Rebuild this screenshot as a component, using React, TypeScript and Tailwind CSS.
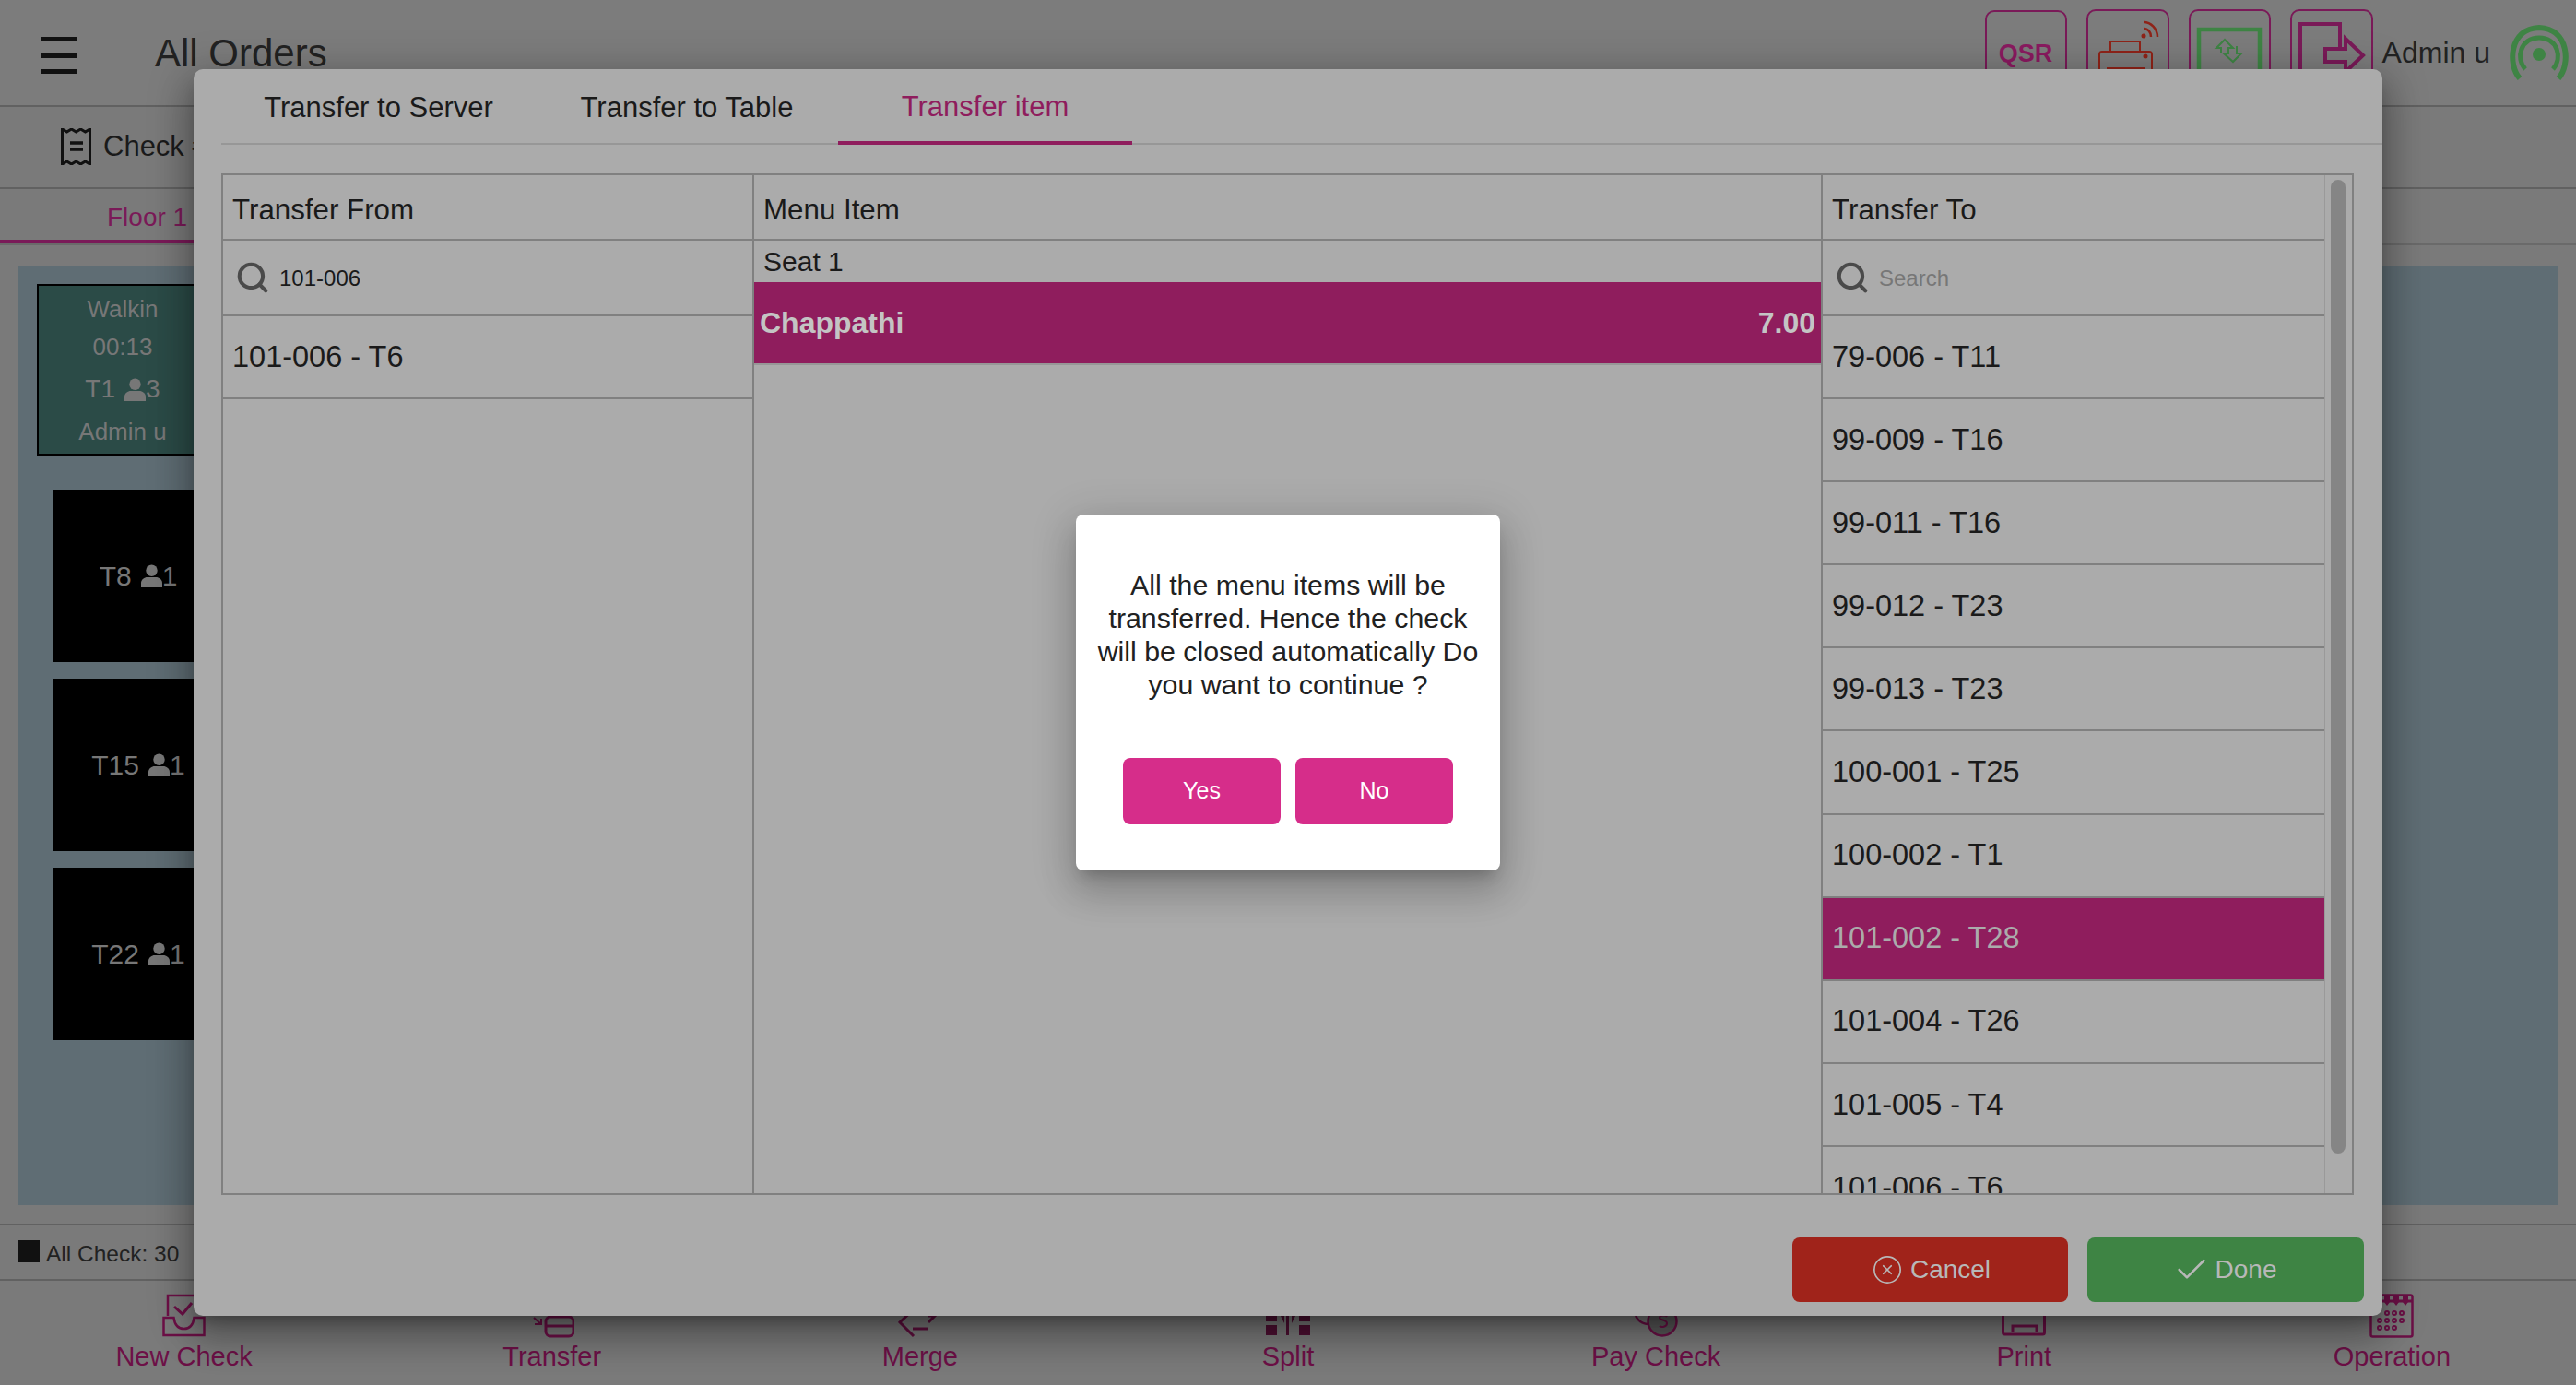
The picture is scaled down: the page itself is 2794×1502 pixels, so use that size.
import { Check, CircleX, Search } from 'lucide-react';

const FROM_ROWS = ['101-006 - T6'];
const TO_ROWS = [
  '79-006 - T11',
  '99-009 - T16',
  '99-011 - T16',
  '99-012 - T23',
  '99-013 - T23',
  '100-001 - T25',
  '100-002 - T1',
  '101-002 - T28',
  '101-004 - T26',
  '101-005 - T4',
  '101-006 - T6',
];

function PersonIcon({ className }: { className?: string }) {
  return (
    <svg viewBox="0 0 24 26" className={className} fill="currentColor">
      <circle cx="12" cy="7" r="6.5" />
      <path d="M0 26v-5c0-4 4-6.5 7-6.5h10c3 0 7 2.500 7 6.500v5z" />
    </svg>
  );
}

function NewCheckIcon() {
  return (
    <svg viewBox="0 0 48 48" className="h-12 w-12" fill="none" stroke="#6d1047" strokeWidth="2.500">
      <path d="M6 24V2h34v20" />
      <path d="M13 14l9 8 10-12" strokeWidth="3" />
      <path d="M1.500 26h11c1 8 5 12 11 12s10-4 11-12h11v19h-44z" />
    </svg>
  );
}

function TransferIcon() {
  return (
    <svg viewBox="0 0 48 48" className="h-12 w-12" fill="none" stroke="#6d1047" strokeWidth="3">
      <rect x="17" y="25" width="30" height="21" rx="5" />
      <path d="M17 35h30" />
      <path d="M4 26l8 7M12 27v6H5" strokeWidth="2" />
    </svg>
  );
}

function MergeIcon() {
  return (
    <svg viewBox="0 0 48 48" className="h-12 w-12" fill="none" stroke="#5f0f3e" strokeWidth="3">
      <path d="M16 18L2 31l15 15" />
      <path d="M16 38h17" />
      <path d="M32 24h8l-7 7" />
    </svg>
  );
}

function SplitIcon() {
  return (
    <svg viewBox="0 0 48 48" className="h-12 w-12" fill="#4f1033">
      <rect x="0" y="20" width="12" height="10" />
      <rect x="0" y="34" width="12" height="11" />
      <rect x="36" y="20" width="12" height="10" />
      <rect x="36" y="34" width="12" height="11" />
      <path d="M22 20h3v25h-3zM14 20h6v12zM34 20h-6v12z" />
    </svg>
  );
}

function PayCheckIcon() {
  return (
    <svg viewBox="0 0 48 48" className="h-12 w-12" fill="none" stroke="#6d1047" strokeWidth="2.500">
      <circle cx="16" cy="18" r="15" />
      <circle cx="31" cy="30" r="15.500" fill="#5a5a5a" />
      <path d="M36 25c-1-2-8-2-8 1s8 2 8 6-6 5-8 3" strokeWidth="2" />
    </svg>
  );
}

function PrintIcon() {
  return (
    <svg viewBox="0 0 48 48" className="h-12 w-12" fill="none" stroke="#6d1047" strokeWidth="3">
      <rect x="1.500" y="14" width="45" height="30" rx="2" />
      <path d="M12 42v-7h26v7" />
    </svg>
  );
}

function OperationIcon() {
  return (
    <svg viewBox="0 0 48 48" className="h-12 w-12" fill="none" stroke="#6d1047" strokeWidth="2.500">
      <rect x="1.500" y="1.500" width="45" height="45" rx="2" />
      <path d="M1 8h46" strokeWidth="3" />
      <path d="M6 1v8l3 4 3-4V1h4v8l3 4 3-4V1h4v8l3 4 3-4V1h4v8l3 4 3-4V1z" fill="#6d1047" stroke="none" />
      {[
        [19, 21],
        [27, 21],
        [35, 21],
        [11, 29],
        [19, 29],
        [27, 29],
        [35, 29],
        [11, 37],
        [19, 37],
        [27, 37],
      ].map(([cx, cy]) => (
        <circle key={`${cx}-${cy}`} cx={cx} cy={cy} r="2" strokeWidth="2" />
      ))}
    </svg>
  );
}

const NAV_ITEMS = [
  { label: 'New Check', icon: <NewCheckIcon /> },
  { label: 'Transfer', icon: <TransferIcon /> },
  { label: 'Merge', icon: <MergeIcon /> },
  { label: 'Split', icon: <SplitIcon /> },
  { label: 'Pay Check', icon: <PayCheckIcon /> },
  { label: 'Print', icon: <PrintIcon /> },
  { label: 'Operation', icon: <OperationIcon /> },
];

function TopBar() {
  return (
    <div className="flex h-[116px] shrink-0 items-start border-b-2 border-[#616161] bg-[#7c7c7c]">
      <div className="ml-[44px] mt-[40px] flex h-[40px] w-[40px] flex-col justify-between">
        <div className="h-[5px] bg-[#111]" />
        <div className="h-[5px] bg-[#111]" />
        <div className="h-[5px] bg-[#111]" />
      </div>
      <div className="ml-[84px] mt-[32px] text-[42px] leading-[52px] text-[#222]">All Orders</div>
      <div className="ml-auto flex items-start">
        <div className="mt-[11px] flex h-[80px] w-[89px] items-start justify-center rounded-[10px] border-2 border-[#7a1a58] pt-[27px] text-[27px] font-bold leading-[36px] text-[#8a1a60]">
          QSR
        </div>
        <div className="ml-[21px] mt-[10px] h-[80px] w-[90px] rounded-[10px] border-2 border-[#7a1a58]">
          <svg viewBox="0 0 86 76" className="h-full w-full" fill="none" stroke="#8f2318" strokeWidth="2">
            <path d="M24 44V33h32v11" />
            <rect x="12" y="44" width="57" height="34" rx="3" />
            <path d="M20 62h42" />
            <circle cx="62" cy="49" r="1.500" fill="#8f2318" />
            <circle cx="60" cy="27" r="2.500" fill="#8f2318" stroke="none" />
            <path d="M60 19c5 0 8 4 8 9M60 12c8 0 15 7 15 16" strokeWidth="2.500" />
          </svg>
        </div>
        <div className="ml-[21px] mt-[10px] h-[80px] w-[89px] rounded-[10px] border-2 border-[#7a1a58]">
          <svg viewBox="0 0 85 76" className="h-full w-full" fill="none" stroke="#3e8444">
            <rect x="9" y="20" width="66" height="70" strokeWidth="4.500" />
            <path d="M33 46v-6h-5l9-9 9 9h-5v6" strokeWidth="2" />
            <path d="M41 40v6h-5l10 9 9-9h-5v-8" strokeWidth="2" />
          </svg>
        </div>
        <div className="ml-[21px] mt-[10px] h-[80px] w-[90px] rounded-[10px] border-2 border-[#7a1a58]">
          <svg viewBox="0 0 86 76" className="h-full w-full" fill="none" stroke="#7a1a58" strokeWidth="4">
            <path d="M9 76V14h43v27" />
            <path d="M36 41h22V30l19 18-19 18V55H36z" />
          </svg>
        </div>
        <div className="ml-[10px] mt-[30px] text-[32px] leading-[54px] text-[#222]">Admin u</div>
        <svg viewBox="0 0 64 60" className="ml-[21px] mr-[8px] mt-[27px] h-[60px] w-[64px]" fill="none" stroke="#3e8444" strokeWidth="6">
          <circle cx="32" cy="32" r="7" fill="#3e8444" stroke="none" />
          <path d="M17 48C6 36 12 14 32 14s26 22 15 34" strokeWidth="5" />
          <path d="M11 58C-2 44-1 4 32 3c33 1 34 41 21 55" />
        </svg>
      </div>
    </div>
  );
}

function Board() {
  return (
    <div className="flex min-h-0 flex-1 flex-col bg-[#7a7a7a] px-[19px] pb-[20px] pt-[22px]">
      <div className="flex flex-1 flex-col items-start bg-[#5f6d74] px-[21px] pt-[20px]">
        <div className="flex h-[186px] w-[186px] flex-col items-center border-2 border-black bg-[#2b4b47] pt-[3px] text-[26px] text-[#777]">
          <div className="leading-[44px]">Walkin</div>
          <div className="leading-[38px]">00:13</div>
          <div className="flex items-center text-[28px] leading-[54px]">
            T1 <PersonIcon className="ml-[10px] h-[25px] w-[23px]" />3
          </div>
          <div className="leading-[38px]">Admin u</div>
        </div>
        {[
          { name: 'T8', seats: 1 },
          { name: 'T15', seats: 1 },
          { name: 'T22', seats: 1 },
        ].map((t, i) => (
          <div
            key={t.name}
            className={`ml-[18px] flex h-[187px] w-[184px] items-center justify-center bg-black text-[30px] text-[#777] ${i === 0 ? 'mt-[37px]' : 'mt-[18px]'}`}
          >
            {t.name} <PersonIcon className="ml-[10px] h-[25px] w-[23px]" />
            {t.seats}
          </div>
        ))}
      </div>
    </div>
  );
}

function BottomNav() {
  return (
    <div className="grid h-[113px] shrink-0 grid-cols-7 bg-[#7a7a7a]">
      {NAV_ITEMS.map((item) => (
        <div key={item.label} className="flex flex-col items-center pt-[14px]">
          {item.icon}
          <div className="mt-[3px] text-[29px] leading-[34px] text-[#6d1047]">{item.label}</div>
        </div>
      ))}
    </div>
  );
}

function SearchRow({ value, placeholder }: { value?: string; placeholder?: string }) {
  return (
    <div className="flex h-[82px] shrink-0 items-center border-b-2 border-[#808080] pl-[13px]">
      <Search className="h-[38px] w-[38px] text-[#4a4a4a]" strokeWidth={2.6} />
      <span className={`ml-[10px] pt-[1px] text-[24px] ${value ? 'text-[#1a1a1a]' : 'text-[#777]'}`}>{value ?? placeholder}</span>
    </div>
  );
}

function HeaderCell({ title }: { title: string }) {
  return (
    <div className="flex h-[71px] shrink-0 items-center border-b-2 border-[#808080] pl-[10px] pt-[7px] text-[31.300px] text-[#1a1a1a]">
      {title}
    </div>
  );
}

function ListRow({ text, selected }: { text: string; selected?: boolean }) {
  return (
    <div
      className={`flex h-[90.1px] shrink-0 items-center border-b-2 border-[#808080] pl-[10px] text-[32.500px] ${
        selected ? 'bg-[#8f1d5d] text-[#ababab]' : 'text-[#1a1a1a]'
      }`}
    >
      {text}
    </div>
  );
}

function TransferModal() {
  return (
    <div className="absolute left-[210px] top-[75px] flex h-[1352px] w-[2374px] flex-col rounded-[10px] bg-[#ababab] pl-[30px] shadow-[0_11px_15px_-7px_rgba(0,0,0,.3),0_24px_38px_3px_rgba(0,0,0,.2),0_9px_46px_8px_rgba(0,0,0,.2)]">
      {/* Tabs */}
      <div className="flex h-[82px] shrink-0 items-stretch border-b-2 border-[#979797] text-[31px] text-[#1a1a1a]">
        <div className="flex w-[341px] items-center justify-center pt-[5px]">Transfer to Server</div>
        <div className="flex w-[328px] items-center justify-center pt-[5px]">Transfer to Table</div>
        <div className="-mb-[2px] flex w-[319px] items-center justify-center border-b-[4px] border-[#8f1d5d] pt-[5px] text-[#8f1d5d]">
          Transfer item
        </div>
      </div>

      {/* Three column table */}
      <div className="mt-[31px] flex h-[1108px] w-[2313px] shrink-0 border-2 border-[#808080]">
        <div className="flex w-[576px] shrink-0 flex-col border-r-2 border-[#808080]">
          <HeaderCell title="Transfer From" />
          <SearchRow value="101-006" />
          {FROM_ROWS.map((r) => (
            <ListRow key={r} text={r} />
          ))}
        </div>
        <div className="flex min-w-0 flex-1 flex-col border-r-2 border-[#808080]">
          <HeaderCell title="Menu Item" />
          <div className="flex h-[45px] shrink-0 items-center pl-[10px] text-[30px] font-medium leading-none text-[#1a1a1a]">Seat 1</div>
          <div className="flex h-[88px] shrink-0 items-center justify-between bg-[#8f1d5d] px-[6px] text-[32px] font-bold text-[#c4c4c4]">
            <span>Chappathi</span>
            <span>7.00</span>
          </div>
          <div className="h-[2px] bg-[#979797]" />
        </div>
        <div className="flex w-[544px] shrink-0 flex-col overflow-hidden">
          <HeaderCell title="Transfer To" />
          <SearchRow placeholder="Search" />
          {TO_ROWS.map((r) => (
            <ListRow key={r} text={r} selected={r === '101-002 - T28'} />
          ))}
        </div>
        <div className="w-[30px] shrink-0 border-l border-[#999] pl-[6px] pt-[5px]">
          <div className="h-[1056px] w-[16px] rounded-full bg-[#858585]" />
        </div>
      </div>

      {/* Footer */}
      <div className="mr-[20px] mt-[46px] flex justify-end gap-[21px] text-[28px] text-[#b8b8b8]">
        <div className="flex h-[70px] w-[299px] items-center justify-center gap-[8px] rounded-[8px] bg-[#a0231a] pl-[2px]">
          <CircleX className="h-[34px] w-[34px]" strokeWidth={1.2} />
          Cancel
        </div>
        <div className="flex h-[70px] w-[300px] items-center justify-center gap-[6px] rounded-[8px] bg-[#3e8444] pr-[2px]">
          <Check className="h-[40px] w-[40px]" strokeWidth={1.5} />
          Done
        </div>
      </div>
    </div>
  );
}

function ConfirmAlert() {
  return (
    <div className="absolute left-[1167px] top-[558px] flex h-[386px] w-[460px] flex-col items-center rounded-[8px] bg-white shadow-[0_11px_15px_-7px_rgba(0,0,0,.2),0_24px_38px_3px_rgba(0,0,0,.14),0_9px_46px_8px_rgba(0,0,0,.12)]">
      <p className="mt-[59px] w-[430px] text-center text-[30.300px] leading-[36px] text-[#212121]">
        All the menu items will be transferred. Hence the check will be closed automatically Do you want to continue ?
      </p>
      <div className="mt-[61px] flex gap-[16px] text-[25px] text-white">
        <div className="flex h-[72px] w-[171px] items-center justify-center rounded-[8px] bg-[#d62d8a]">Yes</div>
        <div className="flex h-[72px] w-[171px] items-center justify-center rounded-[8px] bg-[#d62d8a]">No</div>
      </div>
    </div>
  );
}

export default function App() {
  return (
    <div className="relative flex h-[1502px] w-[2794px] flex-col overflow-hidden bg-[#7a7a7a] font-['Liberation_Sans',Arial,sans-serif]">
      <TopBar />
      <div className="flex h-[89px] shrink-0 items-center border-b-2 border-[#616161] bg-[#7a7a7a] pl-[66px] pb-[1px]">
        <svg viewBox="0 0 34 40" className="h-[40px] w-[34px]" fill="none" stroke="#111" strokeWidth="3">
          <path d="M1.500 1v38l5-3 5 3 5-3 5 3 5-3 5 3V1l-5 3-5-3-5 3-5-3-5 3z" />
          <path d="M10 16h14M10 23h14" strokeWidth="3.500" />
        </svg>
        <span className="ml-[12px] text-[31px] font-medium text-[#1a1a1a]">Check #</span>
      </div>
      <div className="flex h-[61px] shrink-0 items-stretch border-b-2 border-[#6a6a6a] bg-[#7a7a7a]">
        <div className="flex w-[320px] items-center border-b-[4px] border-[#7a1a58] pl-[116px] pt-[6px] text-[28px] text-[#7a1a58]">Floor 1</div>
      </div>
      <Board />
      <div className="flex h-[62px] shrink-0 items-center border-y-2 border-[#616161] bg-[#7a7a7a] pl-[20px]">
        <div className="mb-[3px] h-[24px] w-[23px] bg-[#111]" />
        <span className="ml-[7px] mt-[4px] text-[24.500px] text-[#222]">All Check: 30</span>
      </div>
      <BottomNav />
      <TransferModal />
      <ConfirmAlert />
    </div>
  );
}
